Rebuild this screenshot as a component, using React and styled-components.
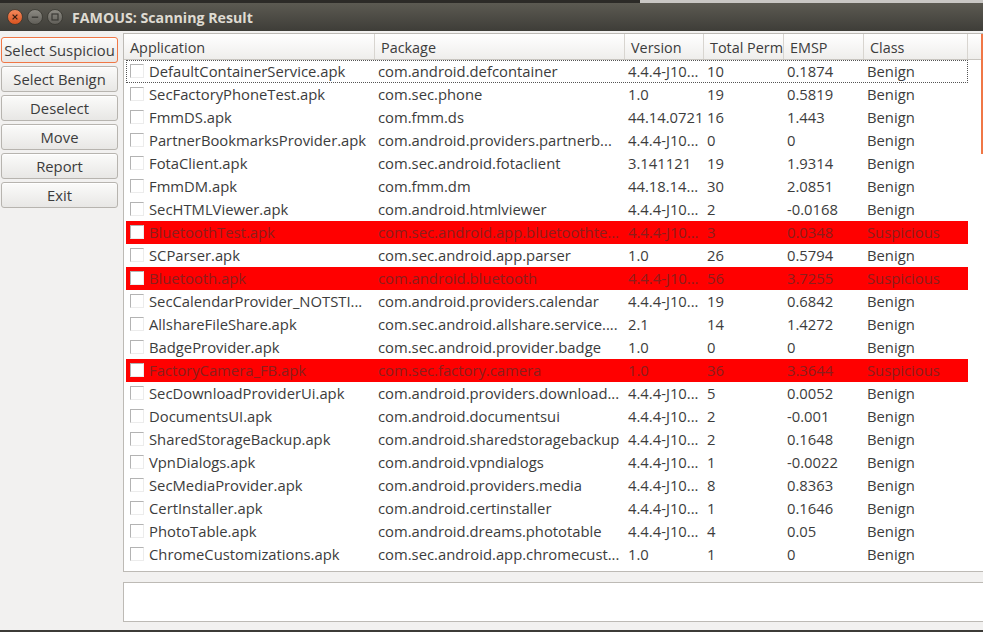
import React from "react";
import styled, { createGlobalStyle } from "styled-components";

const GlobalStyle = createGlobalStyle`
  html, body {
    margin: 0;
    padding: 0;
    overflow: hidden;
    background: #f2f1f0;
  }
  body {
    font-family: "Open Sans", "DejaVu Sans", sans-serif;
  }
`;

const rows = [
  ["DefaultContainerService.apk", "com.android.defcontainer", "4.4.4-J10...", "10", "0.1874", "Benign"],
  ["SecFactoryPhoneTest.apk", "com.sec.phone", "1.0", "19", "0.5819", "Benign"],
  ["FmmDS.apk", "com.fmm.ds", "44.14.0721", "16", "1.443", "Benign"],
  ["PartnerBookmarksProvider.apk", "com.android.providers.partnerb...", "4.4.4-J10...", "0", "0", "Benign"],
  ["FotaClient.apk", "com.sec.android.fotaclient", "3.141121", "19", "1.9314", "Benign"],
  ["FmmDM.apk", "com.fmm.dm", "44.18.14...", "30", "2.0851", "Benign"],
  ["SecHTMLViewer.apk", "com.android.htmlviewer", "4.4.4-J10...", "2", "-0.0168", "Benign"],
  ["BluetoothTest.apk", "com.sec.android.app.bluetoothte...", "4.4.4-J10...", "3", "0.0348", "Suspicious"],
  ["SCParser.apk", "com.sec.android.app.parser", "1.0", "26", "0.5794", "Benign"],
  ["Bluetooth.apk", "com.android.bluetooth", "4.4.4-J10...", "56", "3.7255", "Suspicious"],
  ["SecCalendarProvider_NOTSTI...", "com.android.providers.calendar", "4.4.4-J10...", "19", "0.6842", "Benign"],
  ["AllshareFileShare.apk", "com.sec.android.allshare.service....", "2.1", "14", "1.4272", "Benign"],
  ["BadgeProvider.apk", "com.sec.android.provider.badge", "1.0", "0", "0", "Benign"],
  ["FactoryCamera_FB.apk", "com.sec.factory.camera", "1.0", "36", "3.3644", "Suspicious"],
  ["SecDownloadProviderUi.apk", "com.android.providers.download...", "4.4.4-J10...", "5", "0.0052", "Benign"],
  ["DocumentsUI.apk", "com.android.documentsui", "4.4.4-J10...", "2", "-0.001", "Benign"],
  ["SharedStorageBackup.apk", "com.android.sharedstoragebackup", "4.4.4-J10...", "2", "0.1648", "Benign"],
  ["VpnDialogs.apk", "com.android.vpndialogs", "4.4.4-J10...", "1", "-0.0022", "Benign"],
  ["SecMediaProvider.apk", "com.android.providers.media", "4.4.4-J10...", "8", "0.8363", "Benign"],
  ["CertInstaller.apk", "com.android.certinstaller", "4.4.4-J10...", "1", "0.1646", "Benign"],
  ["PhotoTable.apk", "com.android.dreams.phototable", "4.4.4-J10...", "4", "0.05", "Benign"],
  ["ChromeCustomizations.apk", "com.sec.android.app.chromecust...", "1.0", "1", "0", "Benign"],
];

const buttons = ["Select Suspiciou", "Select Benign", "Deselect", "Move", "Report", "Exit"];
const headers = ["Application", "Package", "Version", "Total Perm", "EMSP", "Class"];

const Window = styled.div`
  display: flex;
  flex-direction: column;
  width: 983px;
  height: 632px;
  background: #f2f1f0;
  border-bottom: 2px solid #3c3b37;
  box-sizing: border-box;
`;

const DesktopStrip = styled.div`
  height: 3px;
  background: linear-gradient(90deg, #2c2a27 0, #2c2a27 640px, #c9c7c4 640px);
`;

const TitleBar = styled.div`
  height: 28px;
  display: flex;
  align-items: center;
  padding-left: 7px;
  background: linear-gradient(#5c5a52, #3e3d38);
`;

const Controls = styled.div`
  display: flex;
  gap: 4px;
  align-items: center;
`;

const Title = styled.div`
  margin-left: 9px;
  font-family: "Open Sans", "DejaVu Sans", sans-serif;
  font-weight: 700;
  font-size: 14.2px;
  color: #dfdbd2;
`;

const Body = styled.div`
  flex: 1;
  display: flex;
  gap: 5px;
  padding: 2px 0 0 1px;
  min-height: 0;
`;

const Sidebar = styled.div`
  width: 117px;
  display: flex;
  flex-direction: column;
  gap: 3px;
  padding-top: 4px;
`;

const SideButton = styled.button`
  height: 26px;
  padding: 0 2px;
  border: 1px solid ${(p) => (p.$focused ? "#f07746" : "#b7b4af")};
  border-radius: 3px;
  background: linear-gradient(#fbfbfa, #e8e7e5);
  color: #3c3c3c;
  font-family: "Open Sans", "DejaVu Sans", sans-serif;
  font-size: 14.8px;
  white-space: nowrap;
  overflow: hidden;
  text-align: center;
  box-shadow: inset 0 1px 0 #ffffff;
`;

const Main = styled.div`
  flex: 1;
  display: flex;
  flex-direction: column;
  margin-right: -4px;
  padding-bottom: 8px;
  min-height: 0;
`;

const TablePanel = styled.div`
  position: relative;
  height: 538px;
  border: 1px solid #bdbab5;
  background: #ffffff;
  overflow: hidden;
`;

const HeaderRow = styled.div`
  display: grid;
  grid-template-columns: 251px 250px 79px 80px 80px 104px 1fr;
  height: 25px;
  background: linear-gradient(#ffffff, #efeeec);
  border-bottom: 1px solid #c8c5c0;
`;

const HeaderCell = styled.div`
  display: flex;
  align-items: center;
  padding: 2px 0 0 6px;
  border-right: 1px solid #d8d5d0;
  font-size: 14.4px;
  color: #3c3c3c;
  white-space: nowrap;
  overflow: hidden;
`;

const RowList = styled.div`
  padding-left: 2px;
`;

const Row = styled.div`
  display: grid;
  grid-template-columns: 249px 250px 79px 80px 80px 104px;
  height: 23px;
  width: 842px;
  box-sizing: border-box;
  background: ${(p) => (p.$flagged ? "#ff0000" : "transparent")};
  color: ${(p) => (p.$flagged ? "#8a1f1c" : "#3c3c3c")};
  outline: ${(p) => (p.$current ? "1px dotted #555" : "none")};
  outline-offset: -1px;
`;

const Cell = styled.div`
  display: flex;
  align-items: center;
  padding-left: 3px;
  padding-bottom: 1px;
  font-size: 14.8px;
  white-space: nowrap;
  overflow: hidden;
`;

const AppCell = styled(Cell)`
  padding-left: 4px;
  gap: 5px;
`;

const Check = styled.span`
  width: 12px;
  height: 12px;
  flex: none;
  border-top: 1px solid #b3b3b3;
  border-left: 1px solid #b3b3b3;
  border-right: 1px solid #ececec;
  border-bottom: 1px solid #ececec;
  background: #ffffff;
`;

const ScrollHint = styled.div`
  position: absolute;
  right: 2px;
  top: 0;
  width: 3px;
  height: 120px;
  background: #f07746;
`;

const Output = styled.div`
  height: 38px;
  margin-top: 10px;
  border: 1px solid #bdbab5;
  background: #ffffff;
`;

const WinButton = ({ kind }) => {
  const close = kind === "close";
  return (
    <svg width="16" height="16" viewBox="0 0 16 16">
      <defs>
        <linearGradient id={`g-${kind}`} x1="0" y1="0" x2="0" y2="1">
          <stop offset="0" stopColor={close ? "#f58a5d" : "#8d8b84"} />
          <stop offset="1" stopColor={close ? "#d9521e" : "#5f5d57"} />
        </linearGradient>
      </defs>
      <circle cx="8" cy="8" r="7.5" fill={`url(#g-${kind})`} stroke="#36352f" strokeWidth="0.8" />
      {close && <path d="M5.6 5.6 L10.4 10.4 M10.4 5.6 L5.6 10.4" stroke="#3a1e12" strokeWidth="1.3" />}
      {kind === "min" && <path d="M4.8 8.2 H11.2" stroke="#3a3935" strokeWidth="1.4" />}
      {kind === "max" && <rect x="5" y="5" width="6" height="6" fill="none" stroke="#3a3935" strokeWidth="1.2" />}
    </svg>
  );
};

export default function App() {
  return (
    <>
      <GlobalStyle />
      <Window>
        <DesktopStrip />
        <TitleBar>
          <Controls>
            <WinButton kind="close" />
            <WinButton kind="min" />
            <WinButton kind="max" />
          </Controls>
          <Title>FAMOUS: Scanning Result</Title>
        </TitleBar>
        <Body>
          <Sidebar>
            {buttons.map((b, i) => (
              <SideButton key={b} $focused={i === 0}>
                {b}
              </SideButton>
            ))}
          </Sidebar>
          <Main>
            <TablePanel>
              <HeaderRow>
                {headers.map((h) => (
                  <HeaderCell key={h}>{h}</HeaderCell>
                ))}
                <HeaderCell />
              </HeaderRow>
              <RowList>
                {rows.map((r, i) => (
                  <Row key={r[0]} $flagged={r[5] === "Suspicious"} $current={i === 0}>
                    <AppCell>
                      <Check />
                      {r[0]}
                    </AppCell>
                    {r.slice(1).map((c, j) => (
                      <Cell key={j}>{c}</Cell>
                    ))}
                  </Row>
                ))}
              </RowList>
              <ScrollHint />
            </TablePanel>
            <Output />
          </Main>
        </Body>
      </Window>
    </>
  );
}
